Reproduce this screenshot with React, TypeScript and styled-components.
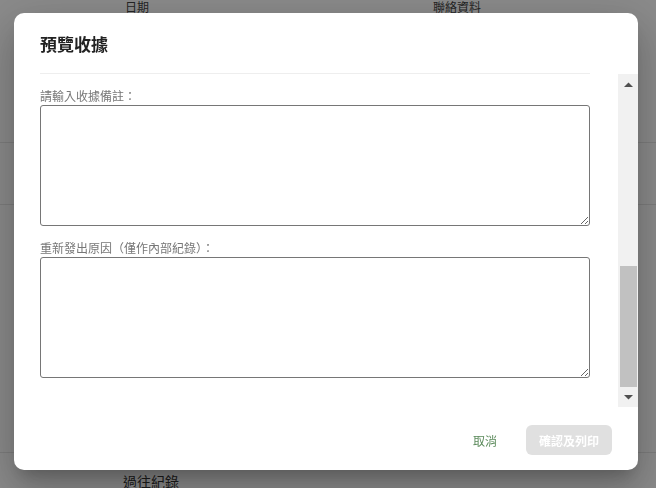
import React, { useLayoutEffect, useRef, useState } from "react";
import styled, { createGlobalStyle } from "styled-components";

const GlobalStyle = createGlobalStyle`
  html, body {
    margin: 0;
    padding: 0;
  }
  body {
    font-family: "Noto Sans CJK TC", "Noto Sans", sans-serif;
    background: #fff;
    color: #333;
  }
  * {
    box-sizing: border-box;
  }
`;

// heights of the table rows behind the dialog
const rowHeights = [127, 62, 248];

const ARROW_SIZE = 20;

type ThumbState = { top: number; height: number };

const App: React.FC<{}> = () => {
  const contentRef = useRef<HTMLDivElement>(null);
  const [thumb, setThumb] = useState<ThumbState>({ top: 0, height: 0 });

  const updateThumb = () => {
    const el = contentRef.current;
    if (!el) {
      return;
    }
    const trackHeight = el.clientHeight - ARROW_SIZE * 2;
    const height = (el.clientHeight / el.scrollHeight) * trackHeight;
    const maxScroll = el.scrollHeight - el.clientHeight;
    const top = maxScroll > 0 ? (el.scrollTop / maxScroll) * (trackHeight - height) : 0;
    setThumb({ top, height });
  };

  useLayoutEffect(() => {
    if (contentRef.current) {
      contentRef.current.scrollTop = contentRef.current.scrollHeight;
    }
    updateThumb();
  }, []);

  const scrollBy = (amount: number) => {
    contentRef.current?.scrollBy({ top: amount });
  };

  return (
    <>
      <GlobalStyle />
      <Page>
        <TableHeader>
          <HeaderCell>日期</HeaderCell>
          <HeaderCell>聯絡資料</HeaderCell>
        </TableHeader>
        {rowHeights.map((height, index) => (
          <TableRow key={index} $height={height} />
        ))}
        <SectionTitle>過往紀錄</SectionTitle>
      </Page>

      <Overlay>
        <Dialog>
          <DialogHeader>
            <Title>預覽收據</Title>
          </DialogHeader>
          <DialogBody>
            <ScrollContent ref={contentRef} onScroll={updateThumb}>
              <ReceiptPreview />
              <Form>
                <Field>
                  <Label>請輸入收據備註：</Label>
                  <TextArea />
                </Field>
                <Field>
                  <Label>重新發出原因（僅作內部紀錄）：</Label>
                  <TextArea />
                </Field>
              </Form>
            </ScrollContent>
            <Scrollbar>
              <ArrowButton onClick={() => scrollBy(-40)}>
                <svg width="9" height="5" viewBox="0 0 9 5">
                  <polygon points="0,5 4.5,0.5 9,5" fill="#505050" />
                </svg>
              </ArrowButton>
              <Track>
                <Thumb style={{ top: thumb.top, height: thumb.height }} />
              </Track>
              <ArrowButton onClick={() => scrollBy(40)}>
                <svg width="9" height="5" viewBox="0 0 9 5">
                  <polygon points="0,0 9,0 4.5,4.5" fill="#505050" />
                </svg>
              </ArrowButton>
            </Scrollbar>
          </DialogBody>
          <DialogFooter>
            <CancelButton>取消</CancelButton>
            <ConfirmButton disabled>確認及列印</ConfirmButton>
          </DialogFooter>
        </Dialog>
      </Overlay>
    </>
  );
};

export default App;

const Page = styled.div`
  width: 656px;
  height: 488px;
  overflow: hidden;
  background: #fff;
`;

const TableHeader = styled.div`
  display: grid;
  grid-template-columns: 308px 1fr;
  padding-left: 125px;
  height: 16px;
`;

const HeaderCell = styled.div`
  font-size: 12px;
  line-height: 14px;
  color: #444;
`;

const TableRow = styled.div<{ $height: number }>`
  height: ${(p) => p.$height}px;
  border-bottom: 1px solid #e6e6e6;
`;

const SectionTitle = styled.div`
  margin: 20px 0 0 123px;
  font-size: 14px;
  line-height: 16px;
  color: #333;
`;

const Overlay = styled.div`
  position: fixed;
  inset: 0;
  background: rgba(0, 0, 0, 0.46);
  display: flex;
  align-items: flex-start;
  padding: 13px 0 0 14px;
`;

const Dialog = styled.div`
  width: 624px;
  height: 457px;
  background: #fff;
  border-radius: 10px;
  display: flex;
  flex-direction: column;
  overflow: hidden;
  box-shadow: 0 11px 15px -7px rgba(0, 0, 0, 0.2),
    0 24px 38px 3px rgba(0, 0, 0, 0.14), 0 9px 46px 8px rgba(0, 0, 0, 0.12);
`;

const DialogHeader = styled.div`
  flex: none;
  height: 61px;
  padding: 0 48px 0 26px;
`;

const Title = styled.h2`
  height: 100%;
  margin: 0;
  padding-top: 19px;
  border-bottom: 1px solid #eeeeee;
  font-size: 17px;
  line-height: 24px;
  font-weight: 700;
  color: #222;
`;

const DialogBody = styled.div`
  flex: none;
  height: 333px;
  display: flex;
`;

const ScrollContent = styled.div`
  flex: 1;
  overflow-y: auto;
  scrollbar-width: none;
  padding: 0 28px 0 26px;
`;

const Scrollbar = styled.div`
  flex: none;
  width: 20px;
  display: flex;
  flex-direction: column;
  background: #f1f1f1;
`;

const ArrowButton = styled.div`
  flex: none;
  height: 20px;
  display: flex;
  align-items: center;
  justify-content: center;
  padding-left: 1px;
  cursor: default;
`;

const Track = styled.div`
  flex: 1;
  position: relative;
`;

const Thumb = styled.div`
  position: absolute;
  left: 2px;
  right: 1px;
  background: #c1c1c1;
`;

const ReceiptPreview = styled.div`
  height: 472px;
`;

const Form = styled.div`
  display: flex;
  flex-direction: column;
  gap: 15px;
  padding: 14px 0 29px;
`;

const Field = styled.div`
  display: flex;
  flex-direction: column;
  gap: 2px;
`;

const Label = styled.label`
  font-size: 12px;
  line-height: 14px;
  color: #777;
`;

const TextArea = styled.textarea`
  display: block;
  width: 100%;
  height: 121px;
  margin: 0;
  padding: 4px 6px;
  border: 1px solid #767676;
  border-radius: 3px;
  resize: vertical;
  font-family: inherit;
  font-size: 12px;
  background: #fff;
`;

const DialogFooter = styled.div`
  flex: 1;
  display: flex;
  justify-content: flex-end;
  align-items: center;
  gap: 13px;
  padding: 3px 26px 0 0;
`;

const CancelButton = styled.button`
  height: 30px;
  padding: 0 16px;
  border: none;
  background: none;
  font-family: inherit;
  font-size: 12px;
  color: #5b8a5b;
  cursor: pointer;
`;

const ConfirmButton = styled.button`
  width: 86px;
  height: 30px;
  border: none;
  border-radius: 6px;
  background: #e0e0e0;
  font-family: inherit;
  font-size: 12px;
  font-weight: 700;
  color: #fff;
  &:disabled {
    cursor: default;
  }
`;
